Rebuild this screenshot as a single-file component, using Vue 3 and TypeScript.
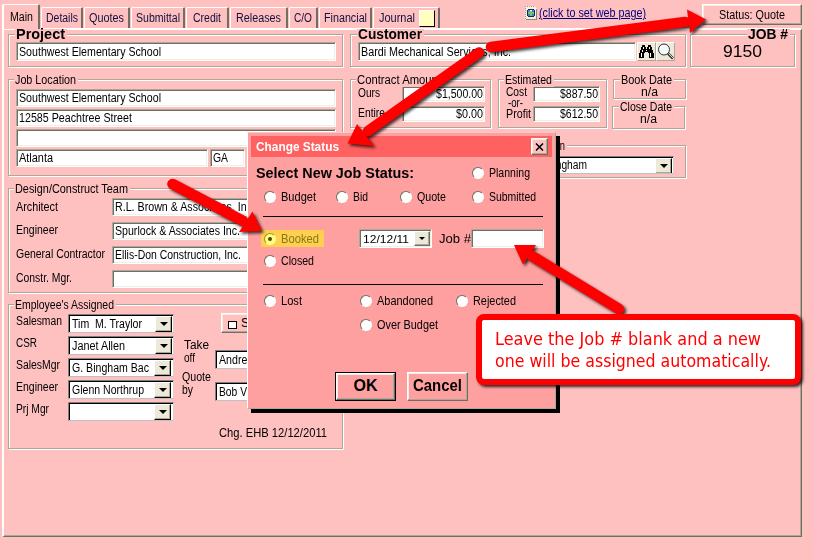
<script setup lang="ts">
import type { Directive } from 'vue'

/* Condenses or widens a text run so it takes exactly the given number of pixels. */
const vFit: Directive<HTMLElement, number> = {
  mounted(el, binding) {
    const natural = el.getBoundingClientRect().width
    if (!natural || !binding.value) return
    el.style.transform = `scaleX(${binding.value / natural})`
    el.style.marginRight = `${binding.value - natural}px`
  },
}

interface Tab { label: string; text: number; width: number }
const tabs: Tab[] = [
  { label: 'Details', text: 32, width: 42 },
  { label: 'Quotes', text: 35, width: 46 },
  { label: 'Submittal', text: 44, width: 54 },
  { label: 'Credit', text: 28, width: 43 },
  { label: 'Releases', text: 45, width: 58 },
  { label: 'C/O', text: 18, width: 29 },
  { label: 'Financial', text: 43, width: 53 },
]

const team = [
  { label: 'Architect', lw: 42, value: 'R.L. Brown & Associates, Inc.', vw: 140 },
  { label: 'Engineer', lw: 42, value: 'Spurlock & Associates Inc.', vw: 125 },
  { label: 'General Contractor', lw: 89, value: 'Ellis-Don Construction, Inc.', vw: 126 },
  { label: 'Constr. Mgr.', lw: 56, value: '', vw: 0 },
]

const staff = [
  { label: 'Salesman', lw: 46, value: 'Tim  M. Traylor', vw: 70, wide: true },
  { label: 'CSR', lw: 21, value: 'Janet Allen', vw: 53, wide: true },
  { label: 'SalesMgr', lw: 44, value: 'G. Bingham Bac', vw: 77, wide: false },
  { label: 'Engineer', lw: 42, value: 'Glenn Northrup', vw: 72, wide: false },
  { label: 'Prj Mgr', lw: 33, value: '', vw: 0, wide: false },
]
</script>

<template>
  <div class="window">
    <header class="strip">
      <nav class="tabs">
        <div class="tab active"><span v-fit="23" class="t">Main</span></div>
        <div v-for="t in tabs" :key="t.label" class="tab" :style="{ width: t.width + 'px' }">
          <span v-fit="t.text" class="t">{{ t.label }}</span>
        </div>
        <div class="tab journal"><span v-fit="36" class="t">Journal</span><i class="note"></i></div>
      </nav>
      <div class="link">
        <svg class="web" width="12" height="14" viewBox="0 0 12 14" shape-rendering="crispEdges">
          <path d="M0 0h9l3 3v11H0z" fill="#f4f1dc" />
          <path d="M0 .5h9M.5 0v14" stroke="#999" stroke-dasharray="1 1" />
          <path d="M11.5 3v11M1 13.5h11" stroke="#888" />
          <circle cx="6" cy="7" r="4" fill="#3f7ed0" stroke="#10285c" />
          <path d="M4 5h3v1h2v2H7v2H5V8H3V6h1z" fill="#7ac068" />
          <path d="M5 4h2v1H5z" fill="#fff" />
        </svg>
        <a><span v-fit="107" class="t">(click to set web page)</span></a>
      </div>
      <button class="raised status"><span v-fit="66" class="t">Status: Quote</span></button>
    </header>

    <main class="panel">
      <section class="row top">
        <div class="group project">
          <span class="legend big"><span v-fit="49" class="t">Project</span></span>
          <div class="input"><span v-fit="142" class="t">Southwest Elementary School</span></div>
        </div>
        <div class="group customer">
          <span class="legend big"><span v-fit="64" class="t">Customer</span></span>
          <div class="input"><span v-fit="150" class="t">Bardi Mechanical Services, Inc.</span></div>
          <div class="tool">
            <svg width="15" height="13" viewBox="0 0 15 13" shape-rendering="crispEdges">
              <path d="M3 0h3v2h1v2h1V2h1V0h3v2h1v3h1v3h1v5h-5V8H9V7H6v1H5v5H0V8h1V5h1V2h1z" fill="#000" />
              <path d="M4.500 2v2M3.500 5v2M2.500 8v4M10.500 2v2M11.500 8v4M7 5.500h1" stroke="#fff" />
            </svg>
          </div>
          <div class="tool">
            <svg width="17" height="17" viewBox="0 0 17 17">
              <circle cx="7" cy="6.500" r="5.500" fill="#f2fafa" stroke="#333" />
              <path d="M4 6q.5-2.500 3-3" fill="none" stroke="#fff" />
              <path d="M11 10.500l5 5" stroke="#333" stroke-width="2.600" />
              <path d="M11.500 10.500l4.500 4.500" stroke="#ddd" />
            </svg>
          </div>
        </div>
        <div class="group job">
          <span class="legend big right"><span v-fit="40" class="t">JOB #</span></span>
          <span class="number"><span v-fit="39" class="t">9150</span></span>
        </div>
      </section>

      <section class="row body">
        <div class="left">
          <div class="group location">
            <span class="legend"><span v-fit="61" class="t">Job Location</span></span>
            <div class="input"><span v-fit="142" class="t">Southwest Elementary School</span></div>
            <div class="input"><span v-fit="113" class="t">12585 Peachtree Street</span></div>
            <div class="input"></div>
            <div class="city">
              <div class="input"><span v-fit="34" class="t">Atlanta</span></div>
              <div class="input state"><span v-fit="15" class="t">GA</span></div>
              <div class="input"></div>
            </div>
          </div>

          <div class="group team">
            <span class="legend"><span v-fit="113" class="t">Design/Construct Team</span></span>
            <div v-for="m in team" :key="m.label" class="member">
              <label><span v-fit="m.lw" class="t">{{ m.label }}</span></label>
              <div class="input"><span v-fit="m.vw" class="t">{{ m.value }}</span></div>
            </div>
          </div>

          <div class="group staff">
            <span class="legend"><span v-fit="99" class="t">Employee's Assigned</span></span>
            <div class="people">
              <div v-for="s in staff" :key="s.label" class="person">
                <label><span v-fit="s.lw" class="t">{{ s.label }}</span></label>
                <div class="combo" :class="{ inset: !s.wide }"><span v-fit="s.vw" class="t">{{ s.value }}</span><i class="drop"></i></div>
              </div>
            </div>
            <div class="others">
              <div class="raised same"><i class="box"></i><span class="t">S</span></div>
              <div class="pair">
                <label class="two"><span v-fit="25" class="t">Take</span><br /><span v-fit="11" class="t">off</span></label>
                <div class="combo"><span v-fit="36" class="t">Andrew</span></div>
              </div>
              <div class="pair second">
                <label class="two"><span v-fit="29" class="t">Quote</span><br /><span v-fit="11" class="t">by</span></label>
                <div class="combo"><span v-fit="28" class="t">Bob V</span></div>
              </div>
              <div class="changed"><span v-fit="108" class="t">Chg. EHB 12/12/2011</span></div>
            </div>
          </div>
        </div>

        <div class="rightside">
          <div class="row figures">
            <div class="group contract">
              <span class="legend"><span v-fit="84" class="t">Contract Amount</span></span>
              <div class="amount"><label><span v-fit="22" class="t">Ours</span></label><div class="input"><span v-fit="47" class="t">$1,500.00</span></div></div>
              <div class="amount"><label><span v-fit="27" class="t">Entire</span></label><div class="input"><span v-fit="27" class="t">$0.00</span></div></div>
            </div>
            <div class="group estimated">
              <span class="legend"><span v-fit="47" class="t">Estimated</span></span>
              <div class="names">
                <span v-fit="21" class="t">Cost</span><span v-fit="15" class="t or">-or-</span><span v-fit="25" class="t">Profit</span>
              </div>
              <div class="values">
                <div class="input"><span v-fit="38" class="t">$887.50</span></div>
                <div class="input"><span v-fit="38" class="t">$612.50</span></div>
              </div>
            </div>
            <div class="dates">
              <div class="group date"><span class="legend"><span v-fit="51" class="t">Book Date</span></span><span v-fit="17" class="t">n/a</span></div>
              <div class="group date close"><span class="legend"><span v-fit="52" class="t">Close Date</span></span><span v-fit="17" class="t">n/a</span></div>
            </div>
          </div>
          <div class="group salesperson">
            <span class="legend end"><span v-fit="52" class="t">Salesperson</span></span>
            <div class="combo"><span v-fit="54" class="t">G. Bingham</span><i class="drop"></i></div>
          </div>
        </div>
      </section>
    </main>

    <div class="dialog">
      <div class="titlebar"><span v-fit="83" class="t">Change Status</span>
        <button class="raised x"><svg width="9" height="8" viewBox="0 0 9 8"><path d="M1 .5l7 7M8 .5l-7 7" stroke="#000" stroke-width="1.500" /></svg></button>
      </div>
      <div class="options">
        <div class="line first">
          <span class="heading"><span v-fit="158" class="t">Select New Job Status:</span></span>
          <label class="opt"><i class="radio"></i><span v-fit="41" class="t">Planning</span></label>
        </div>
        <div class="line four">
          <label class="opt"><i class="radio"></i><span v-fit="35" class="t">Budget</span></label>
          <label class="opt"><i class="radio"></i><span v-fit="15" class="t">Bid</span></label>
          <label class="opt"><i class="radio"></i><span v-fit="29" class="t">Quote</span></label>
          <label class="opt"><i class="radio"></i><span v-fit="47" class="t">Submitted</span></label>
        </div>
        <hr />
        <div class="line booked">
          <label class="opt marked"><i class="radio on"></i><span v-fit="38" class="t">Booked</span></label>
          <div class="input dateinput"><span v-fit="46" class="t">12/12/11</span><i class="drop small"></i></div>
          <span class="joblabel"><span v-fit="32" class="t">Job #</span></span>
          <div class="input jobinput"></div>
        </div>
        <div class="line closed">
          <label class="opt"><i class="radio"></i><span v-fit="33" class="t">Closed</span></label>
        </div>
        <hr class="lower" />
        <div class="line three">
          <label class="opt"><i class="radio"></i><span v-fit="21" class="t">Lost</span></label>
          <label class="opt"><i class="radio"></i><span v-fit="56" class="t">Abandoned</span></label>
          <label class="opt"><i class="radio"></i><span v-fit="43" class="t">Rejected</span></label>
        </div>
        <div class="line three">
          <span></span>
          <label class="opt"><i class="radio"></i><span v-fit="61" class="t">Over Budget</span></label>
        </div>
      </div>
      <div class="actions">
        <div class="default"><button class="raised"><span v-fit="24" class="t">OK</span></button></div>
        <button class="raised cancel"><span v-fit="49" class="t">Cancel</span></button>
      </div>
    </div>

    <svg class="arrows" width="813" height="559" viewBox="0 0 813 559">
      <g stroke="#f00" stroke-width="10.500" stroke-linecap="round" fill="#f00">
        <g><path d="M479 52.500L368 131" /><path d="M347.500 143.500L357 124L374 146z" stroke="none" /></g>
        <g><path d="M491 47L685 22" /><path d="M706 19.500L687 9.500L690 33z" stroke="none" /></g>
        <g><path d="M172.500 184L243 221" /><path d="M262 231L252.500 211.500L239 232z" stroke="none" /></g>
        <g><path d="M619 309L532 256" /><path d="M514 245L536 245L523 264.500z" stroke="none" /></g>
      </g>
    </svg>

    <div class="callout">
      <div><span v-fit="266" class="t">Leave the Job # blank and a new</span></div>
      <div><span v-fit="276" class="t">one will be assigned automatically.</span></div>
    </div>
  </div>
</template>

<style>
body { background: #ffc0c0; overflow: hidden; }
</style>

<style scoped>
.window { position: relative; box-sizing: border-box; width: 813px; height: 559px; padding: 4px 0 0 2px; background: #ffc0c0; color: #000; font: 12px/14px "Liberation Sans", sans-serif; overflow: hidden; }
.window * { box-sizing: border-box; }
.t { display: inline-block; white-space: pre; transform-origin: 0 50%; flex: none; }
.row { display: flex; }
button { font: inherit; color: inherit; padding: 0; margin: 0; }
.raised { display: flex; align-items: center; justify-content: center; background: #ffc0c0; border: 1px solid; border-color: #fff #716f64 #716f64 #fff; box-shadow: inset -1px -1px #aca899, inset 1px 1px #f8ede4; }

.strip { display: flex; height: 24px; }
.tabs { display: flex; align-items: flex-end; width: 523px; color: #101040; }
.tab { display: flex; justify-content: center; height: 21px; padding-top: 3px; margin-right: 1px; flex: none; border: solid; border-width: 1px 2px 0 1px; border-color: #fff #716f64 #fff #fff; border-radius: 2px 2px 0 0; }
.tab.active { position: relative; z-index: 1; width: 38px; height: 25px; padding-top: 5px; margin-bottom: -1px; border-left-width: 2px; background: #ffc0c0; color: #000; }
.tab.journal { width: 67px; justify-content: flex-start; padding-left: 5px; }
.note { width: 16px; height: 17px; margin: -1px 0 0 4px; background: #ffffc0; border: 1px solid; border-color: #fff #000 #000 #fff; }
.link { display: flex; width: 177px; padding-top: 2px; color: #000080; }
.link a { margin-left: 2px; }
.link .t { text-decoration: underline; text-underline-offset: 1px; }
.web { flex: none; }
.status { width: 100px; height: 21px; }

.panel { width: 800px; height: 509px; padding: 4px 0 0 4px; border: 2px solid; border-color: #fff #716f64 #716f64 #fff; box-shadow: inset -1px -1px #aca899; border-right-width: 1px; border-bottom-width: 1px; }
.group { position: relative; border: 1px solid #aca899; box-shadow: 1px 1px #fff, inset 1px 1px #fff; flex: none; }
.legend { position: absolute; top: -7px; left: 5px; padding: 0 2px 0 1px; background: #ffc0c0; white-space: nowrap; line-height: 14px; }
.legend.big { top: -6px; left: 6px; font-size: 14px; font-weight: bold; line-height: 10px; }
.legend.right { left: auto; right: 4px; }
.input { display: flex; align-items: center; height: 18px; padding-left: 2px; background: #fff; border: 1px solid; border-color: #aca899 #fff #fff #aca899; box-shadow: inset 1px 1px #716f64, inset -1px -1px #f1efe2; overflow: hidden; }
.project, .customer { height: 33px; padding: 7px 6px 0 7px; }
.project { width: 335px; margin-right: 7px; }
.project .input, .customer .input { height: 19px; }
.customer { display: flex; width: 336px; margin-right: 4px; }
.customer .input { width: 278px; margin-right: 1px; }
.tool { display: flex; align-items: center; justify-content: center; width: 19px; height: 19px; background: #ece9d8; border: 1px solid; border-color: #fff #aca899 #aca899 #fff; }
.job { width: 105px; height: 33px; }
.number { display: block; padding: 8px 0 0 32px; font-size: 16px; line-height: 18px; }

.body { margin-top: 12px; }
.left { width: 335px; margin-right: 7px; }
.location { display: flex; flex-direction: column; gap: 2px; height: 97px; padding: 9px 6px 0 7px; }
.location .input { flex: none; }
.city { display: flex; gap: 2px; }
.city .input { width: 192px; }
.city .state { width: 35px; }
.city .input:last-child { flex: 1; width: auto; }
.team { height: 105px; margin-top: 12px; padding: 9px 6px 0 7px; }
.member { display: flex; margin-bottom: 6px; }
.member label { width: 96px; padding-top: 1px; }
.member:nth-of-type(1) label { padding-top: 2px; }
.member .input { flex: 1; }
.staff { display: flex; height: 145px; margin-top: 11px; padding: 9px 0 0 7px; }
.people { width: 158px; }
.person { display: flex; height: 22px; }
.person label { width: 52px; }
.combo { position: relative; display: flex; align-items: center; width: 106px; height: 19px; padding-left: 3px; background: #fff; border: 1px solid; border-color: #808080 #d8d4cc #c0c0c0 #808080; box-shadow: inset 1px 1px #000; overflow: hidden; }
.drop { display: flex; align-items: center; justify-content: center; width: 17px; height: 16px; margin: 1px 1px 0 auto; background: #ece9d8; border: 1px solid; border-color: #fff #000 #000 #fff; box-shadow: inset -1px -1px #aca899; flex: none; }
.drop::after { content: ""; border: solid transparent; border-width: 4px 4px 0; border-top-color: #000; }
.inset .drop { margin-right: 2px; }
.others { flex: 1; padding-left: 7px; }
.same { width: 104px; height: 20px; margin: -1px 0 0 40px; padding: 3px 0 0 6px; justify-content: flex-start; gap: 4px; }
.same .t { margin-top: -3px; }
.box { width: 9px; height: 8px; border: 1px solid #000; background: #fff; }
.pair { display: flex; height: 32px; margin-top: 5px; }
.pair.second { margin-top: 0; }
.two { width: 34px; padding: 1px 0 0 3px; line-height: 13px; }
.second .two { padding-left: 1px; }
.pair .combo { margin-top: 12px; }
.changed { margin: 24px 0 0 38px; }

.contract { width: 141px; height: 49px; padding: 6px 0 0 7px; margin-right: 7px; }
.amount { display: flex; height: 20px; }
.amount label { width: 44px; line-height: 14px; }
.amount .input { width: 83px; height: 16px; justify-content: flex-end; padding-right: 1px; }
.estimated { display: flex; width: 109px; height: 49px; padding: 7px 0 0 7px; margin-right: 5px; }
.names { display: flex; flex-direction: column; width: 27px; align-items: flex-start; line-height: 11px; }
.names .or { margin-left: 2px; }
.values { width: 67px; }
.values .input { height: 16px; margin: -1px 0 5px; justify-content: flex-end; padding-right: 1px; }
.date { width: 73px; height: 20px; padding: 5px 0 0 27px; margin-left: 1px; }
.date.close { height: 23px; margin: 7px 0 0; }
.date .legend { left: 6px; }
.salesperson { width: 336px; height: 33px; margin-top: 16px; padding: 10px 12px 0 180px; }
.salesperson .combo { width: 143px; height: 18px; padding-left: 1px; }
.salesperson .legend.end { left: auto; right: 118px; }

.dialog { position: absolute; left: 247px; top: 132px; width: 309px; height: 277px; padding: 3px; background: #ffa0a0; border: 1px solid; border-color: #ffc8c8 #aca899 #aca899 #fff; box-shadow: 4px 4px #000; }
.titlebar { display: flex; align-items: center; width: 301px; height: 21px; padding-left: 5px; background: #ff6060; color: #fff; font-weight: bold; }
.x { width: 17px; height: 17px; margin: 0 4px 0 auto; }
.options { padding: 0 0 0 13px; }
.line { display: grid; height: 24px; align-items: center; }
.first { grid-template-columns: 208px 1fr; height: 28px; padding-top: 3px; }
.heading { margin-left: -8px; font-size: 14px; font-weight: bold; }
.four { grid-template-columns: 72px 64px 72px 1fr; }
.three { grid-template-columns: 96px 96px 1fr; }
.opt { display: flex; align-items: center; gap: 5px; }
.radio { position: relative; width: 12px; height: 12px; border-radius: 50%; background: #fff; border: 1px solid; border-color: #716f64 #fff #fff #716f64; flex: none; }
.radio.on { background: #ffff80; border-color: #a09030 #ffff90 #ffff90 #a09030; }
.radio.on::after { content: ""; position: absolute; left: 3px; top: 3px; width: 4px; height: 4px; border-radius: 50%; background: #504800; }
hr { width: 280px; height: 1px; margin: 7px 0 0 -1px; border: 0; background: #000; }
.booked { grid-template-columns: 98px 76px 36px 73px; height: 18px; margin: 12px 0 0 -3px; }
.marked { width: 63px; height: 17px; padding-left: 3px; background: #ffd050; color: #857818; }
.dateinput { width: 73px; height: 19px; padding-left: 3px; }
.dateinput .t { font-size: 11.500px; }
.drop.small { height: 15px; width: 16px; margin-top: 0; border-color: #fff #716f64 #716f64 #fff; }
.drop.small::after { border-width: 3px 3px 0; }
.joblabel { padding: 1px 0 0 4px; font-size: 13px; }
.jobinput { height: 19px; }
.closed { margin-top: 2px; }
hr.lower { margin-top: 11px; margin-bottom: 4px; }
.actions { display: flex; gap: 11px; margin: 35px 0 0 84px; font-size: 16px; font-weight: bold; }
.actions .raised { background: #ffa0a0; }
.default { width: 61px; height: 29px; border: 1px solid #000; }
.default .raised { width: 59px; height: 27px; }
.actions .t { margin-top: -1px; }
.cancel { width: 61px; height: 29px; }

.arrows { position: absolute; left: 0; top: 0; pointer-events: none; }
.arrows g g { filter: drop-shadow(2px 2px 1.500px rgba(0, 0, 0, .75)); }
.callout { position: absolute; left: 476px; top: 314px; width: 325px; height: 71px; padding: 8px 0 0 13px; background: #fff; border: 6px solid #f00; border-radius: 8px; box-shadow: 2px 2px 3px rgba(0, 0, 0, .8); color: #f00; font: 17px/22px "DejaVu Sans", sans-serif; }
</style>
